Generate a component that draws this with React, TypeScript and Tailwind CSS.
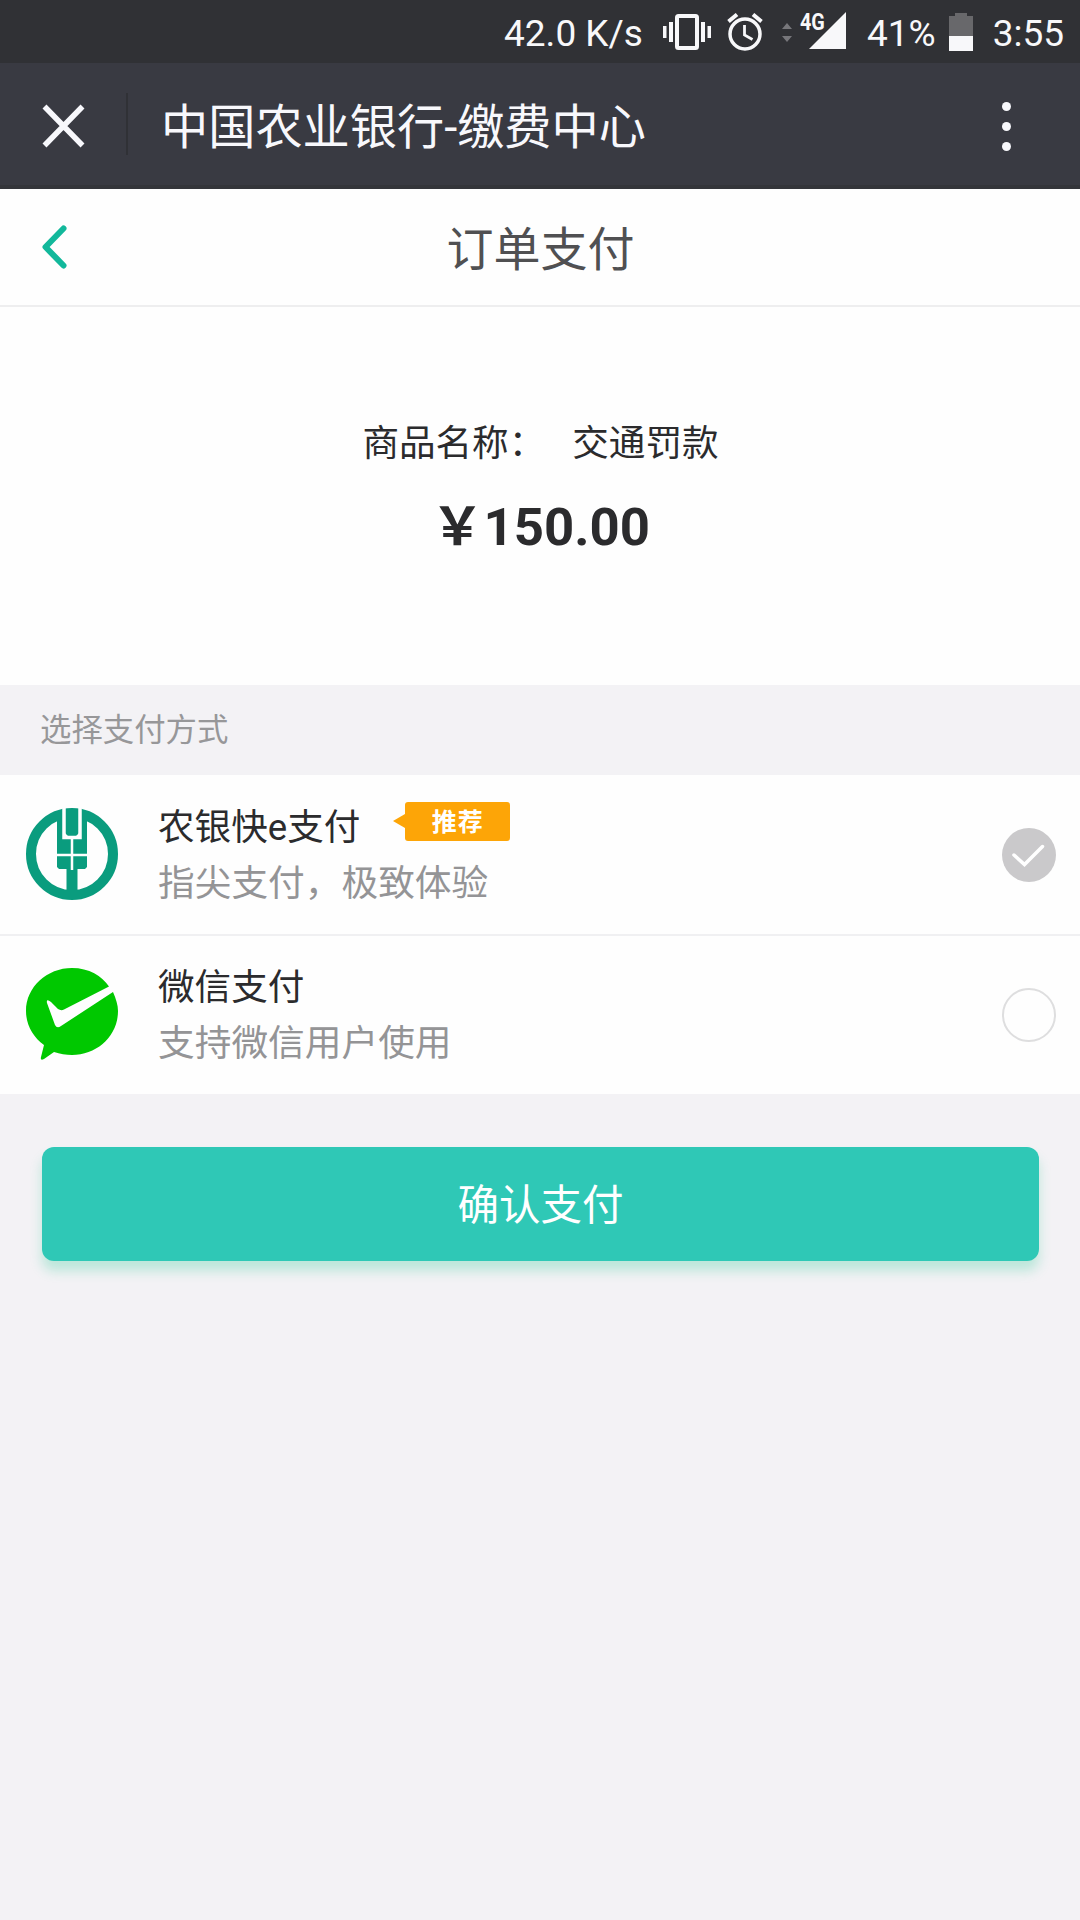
import { useState } from 'react';
import type { ReactNode } from 'react';

interface PayMethod {
  id: string;
  name: string;
  hint: string;
  logo: ReactNode;
  recommended?: boolean;
}

const METHODS: PayMethod[] = [
  { id: 'abc', name: '农银快e支付', hint: '指尖支付，极致体验', logo: <BankLogo />, recommended: true },
  { id: 'wechat', name: '微信支付', hint: '支持微信用户使用', logo: <WechatPayLogo /> },
];

export default function App() {
  const [selected, setSelected] = useState('abc');

  return (
    <div className="w-[1080px] h-[1920px] overflow-hidden flex flex-col bg-[#f3f2f5] text-[#2b2b2d] font-['Roboto','Noto_Sans_CJK_SC',sans-serif]">
      <StatusBar />
      <TitleBar />

      {/* Page header */}
      <div className="h-[118px] shrink-0 flex items-center bg-[#fefefe] border-b-2 border-[#eeeeef]">
        <button className="w-[120px] pl-[41px]">
          <svg className="w-[26px] h-[44px]" viewBox="0 0 26 44" fill="none" stroke="#12b89b" strokeWidth={6} strokeLinecap="round" strokeLinejoin="round">
            <path d="M22.500 3.500L4.500 22L22.500 40.500" />
          </svg>
        </button>
        <h1 className="flex-1 text-center text-[47px] leading-none text-[#505052] pt-[4px]">订单支付</h1>
        <div className="w-[119px]" />
      </div>

      {/* Order summary */}
      <div className="h-[378px] shrink-0 bg-[#fefefe] flex flex-col items-center pt-[112px] pl-px">
        <p className="text-[36.600px] leading-[50px] flex gap-[27px]">
          <span>商品名称：</span>
          <span>交通罚款</span>
        </p>
        <p className="mt-[26px] text-[52.700px] leading-[64px] font-bold">￥150.00</p>
      </div>

      <div className="h-[90px] shrink-0 flex items-center pl-[40px] pt-[2px] text-[31.400px] text-[#979799]">选择支付方式</div>

      <div className="bg-[#fefefe] shrink-0 pb-px">
        {METHODS.map((m, i) => (
          <div
            key={m.id}
            onClick={() => setSelected(m.id)}
            className={`flex items-center h-[159px] pl-[26px] pr-[24px] ${i > 0 ? 'border-t-2 border-[#f0f0f2]' : ''}`}
          >
            {m.logo}
            <div className="ml-[40px] pt-[2px] flex-1">
              <div className="flex items-center h-[56px]">
                <span className="text-[36.600px] leading-[56px]">{m.name}</span>
                {m.recommended && <RecommendTag />}
              </div>
              <p className="text-[36.700px] leading-[56px] text-[#949496]">{m.hint}</p>
            </div>
            <Radio checked={selected === m.id} />
          </div>
        ))}
      </div>

      <button className="mt-[53px] ml-[42px] mr-[41px] h-[114px] pt-[4px] shrink-0 rounded-xl bg-[#2fc8b6] text-white text-[41.500px] shadow-[0_10px_12px_rgba(47,200,150,0.28)]">
        确认支付
      </button>
    </div>
  );
}

function StatusBar() {
  return (
    <div className="h-[63px] shrink-0 flex items-center justify-end pr-[16px] bg-[#303135] text-[#f8f8fa] text-[37px] leading-none">
      <span className="pt-[4px]">42.0 K/s</span>
      {/* Vibrate */}
      <svg className="ml-[20px] w-[48px] h-[36px]" viewBox="0 0 48 36" fill="currentColor">
        <path d="M0 12h3.500v12H0zM6 8h4v20H6zM38 8h4v20h-4zM44.500 12H48v12h-3.500z" />
        <rect x="14" y="2" width="20" height="32" rx="1.500" fill="none" stroke="currentColor" strokeWidth={4} />
      </svg>
      {/* Alarm */}
      <svg className="ml-[16px] w-[36px] h-[38px]" viewBox="0 0 36 38" fill="none" stroke="currentColor" strokeWidth={3.5}>
        <circle cx="18" cy="21" r="15" />
        <path d="M1.500 8.500L10 1.500M26 1.500L34.500 8.500" strokeWidth={4} />
        <path d="M17.500 12v10l8 4.500" strokeWidth={2.8} />
      </svg>
      {/* Data traffic */}
      <svg className="ml-[19px] mt-[3px] w-[10px] h-[20px]" viewBox="0 0 10 20" fill="#77777b">
        <path d="M0 6L5 0L10 6zM0 13h10L5 19z" />
      </svg>
      {/* Signal */}
      <div className="relative ml-[8px] mb-[3px] w-[46px] h-[37px]">
        <svg className="ml-[9px] w-[37px] h-[37px]" viewBox="0 0 37 37" fill="currentColor">
          <path d="M37 0V37H0z" />
        </svg>
        <span className="absolute left-0 top-px origin-left scale-x-[0.86] text-[23px] leading-[19px] font-bold [text-shadow:0_0_2px_#303135]">4G</span>
      </div>
      <span className="ml-[21px] pt-[4px]">41%</span>
      {/* Battery */}
      <svg className="ml-[13px] w-[24px] h-[38px]" viewBox="0 0 24 38">
        <path d="M6 0h12v3h6v20H0V3h6z" fill="#68686b" />
        <path d="M0 23h24v15H0z" fill="currentColor" />
      </svg>
      <span className="ml-[20px] pt-[4px]">3:55</span>
    </div>
  );
}

function TitleBar() {
  return (
    <div className="h-[126px] shrink-0 flex items-center bg-[#393a42] text-[#f8f8fc] border-b-4 border-[#34353a]">
      <svg className="ml-[42px] mt-[4px] w-[43px] h-[44px]" viewBox="0 0 43 44" fill="none" stroke="currentColor" strokeWidth={5.5}>
        <path d="M2.500 2.500L40.500 41.500M40.500 2.500L2.500 41.500" />
      </svg>
      <div className="ml-[41px] w-[2px] h-[62px] bg-[#303136]" />
      <h2 className="ml-[33px] flex-1 pt-[10px] text-[47.200px] leading-none">中国农业银行-缴费中心</h2>
      <div className="mr-[69px] mt-[4px] flex flex-col gap-[11px]">
        <i className="size-[9px] rounded-full bg-current" />
        <i className="size-[9px] rounded-full bg-current" />
        <i className="size-[9px] rounded-full bg-current" />
      </div>
    </div>
  );
}

function RecommendTag() {
  return (
    <span className="ml-[33px] mb-[13px] flex items-center">
      <svg className="w-[12px] h-[24px]" viewBox="0 0 12 24" fill="#fda507">
        <path d="M12 5L0 12L12 19z" />
      </svg>
      <span className="w-[105px] h-[39px] rounded-[3px] bg-[#fda507] text-white text-[25px] leading-[41px] font-bold text-center tracking-[1px]">推荐</span>
    </span>
  );
}

function Radio({ checked }: { checked: boolean }) {
  if (!checked) {
    return <span className="size-[54px] rounded-full border-2 border-[#dededf]" />;
  }
  return (
    <svg className="size-[54px]" viewBox="0 0 54 54">
      <circle cx="27" cy="27" r="27" fill="#cac9cb" />
      <path d="M12 27L22.500 36.500L40.500 18.500" fill="none" stroke="#fff" strokeWidth={3.5} strokeLinecap="round" />
    </svg>
  );
}

function BankLogo() {
  return (
    <svg className="size-[92px] mb-[2px]" viewBox="0 0 92 92">
      <circle cx="46" cy="46" r="41" fill="#fefefe" stroke="#0a9c7e" strokeWidth={10} />
      <path d="M31 8H61V59L59 61H51.500V86H40.500V61H33L31 59z" fill="#0a9c7e" />
      <path d="M38 -2V29.500H54V-2" fill="none" stroke="#fefefe" strokeWidth={3.5} />
      <path d="M38 24V30H44zM54 24V30H48z" fill="#fefefe" />
      <path d="M46 31V62M31 47H61" stroke="#fefefe" strokeWidth={2.5} />
    </svg>
  );
}

function WechatPayLogo() {
  return (
    <svg className="size-[92px] mb-[2px]" viewBox="0 0 92 92">
      <path
        d="M46 0C63 0 76 8 83 18.500L38 41.500Q35 43 32 41L25 34Q20 30 21 35L29 57Q31 61 35 58L87 24C90 31 92 37 92 43C92 68 71 87 46 87C40 87 34 86 28 84L18 91Q14 93 15 89L18 77C7 69 0 57 0 43C0 19 21 0 46 0z"
        fill="#00c800"
      />
    </svg>
  );
}
